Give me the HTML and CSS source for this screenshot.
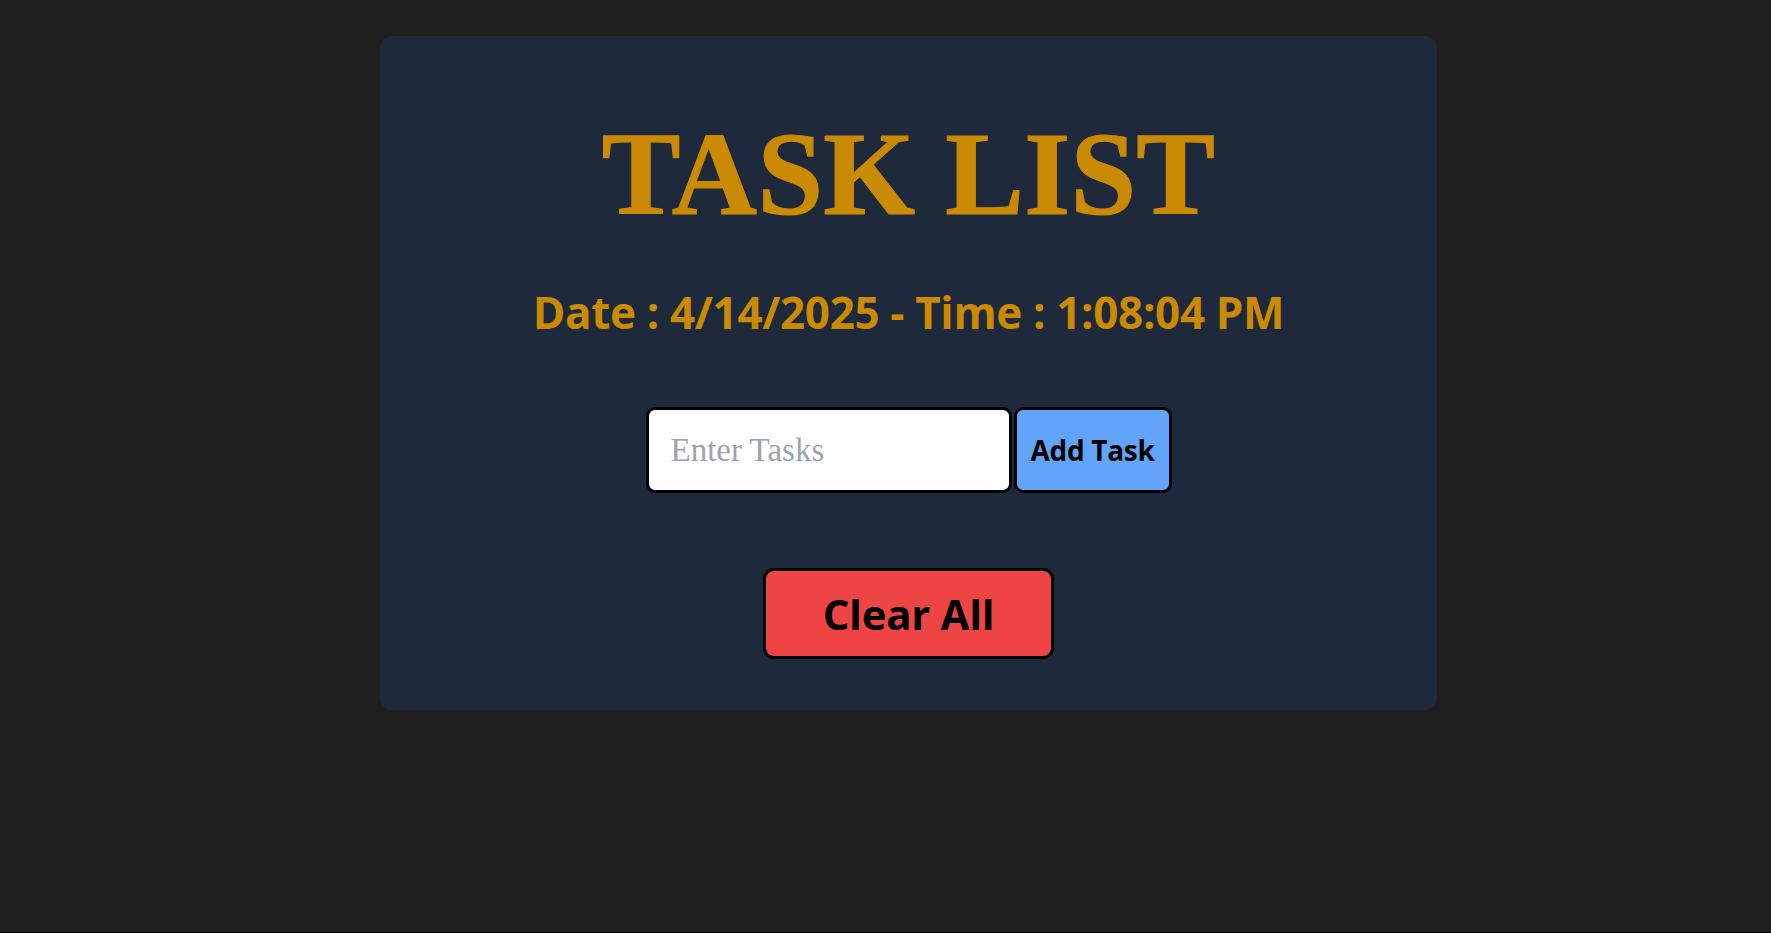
FILE: index.html
```html
<!DOCTYPE html>
<html lang="en">
<head>
<meta charset="utf-8">
<title>Task List</title>
<link rel="stylesheet" href="styles.css">
</head>
<body>
  <main class="card">
    <h1 class="title">TASK LIST</h1>
    <p class="clock">Date : 4/14/2025 - Time : 1:08:04 PM</p>
    <div class="entry">
      <input class="task-input" type="text" placeholder="Enter Tasks">
      <button class="add-btn" type="button">Add Task</button>
    </div>
    <ul class="tasks"></ul>
    <button class="clear-btn" type="button">Clear All</button>
  </main>
</body>
</html>
```

FILE: styles.css
```css
html {
  background: #000;
}
body {
  margin: 0;
  min-height: 932px;
  background: #1f1f1f;
  padding: 36px 0 0 380px;
  box-sizing: border-box;
  font-family: "Open Sans", "Noto Sans", sans-serif;
}
.card {
  width: 1057px;
  box-sizing: border-box;
  background: #1e293b;
  border-radius: 12px;
  padding: 81px 0 51px;
  display: flex;
  flex-direction: column;
  align-items: center;
}
.title {
  margin: 0;
  font-family: "Liberation Serif", "Times New Roman", serif;
  font-weight: 700;
  font-size: 118px;
  line-height: 116px;
  letter-spacing: 0.3px;
  color: #ca8a04;
  -webkit-text-stroke: 1.2px #ca8a04;
}
.clock {
  margin: 57px 0 0;
  font-family: "Open Sans", sans-serif;
  font-weight: 700;
  font-size: 44px;
  line-height: 44px;
  color: #ca8a04;
  letter-spacing: -0.35px;
}
.entry {
  margin-top: 73px;
  display: flex;
  align-items: center;
  gap: 2px;
}
.task-input {
  width: 366px;
  height: 86px;
  box-sizing: border-box;
  border: 3px solid #000;
  border-radius: 9px;
  background: #fff;
  padding: 0 20px 0 22px;
  font-family: "Liberation Serif", Georgia, serif;
  font-size: 33px;
  color: #111;
  outline: none;
}
.task-input::placeholder {
  color: #9ca3af;
}
.add-btn {
  width: 158px;
  height: 86px;
  box-sizing: border-box;
  border: 3px solid #000;
  border-radius: 9px;
  background: #60a5fa;
  color: #000;
  font-family: "Open Sans", sans-serif;
  font-weight: 700;
  font-size: 28px;
  padding: 0;
  letter-spacing: -0.3px;
}
.tasks {
  list-style: none;
  margin: 0;
  padding: 0;
}
.clear-btn {
  margin-top: 75px;
  width: 291px;
  height: 91px;
  box-sizing: border-box;
  border: 3px solid #000;
  border-radius: 11px;
  background: #ef4444;
  color: #000;
  font-family: "Open Sans", sans-serif;
  font-weight: 700;
  font-size: 42px;
  padding: 0;
  letter-spacing: -0.3px;
}
```
